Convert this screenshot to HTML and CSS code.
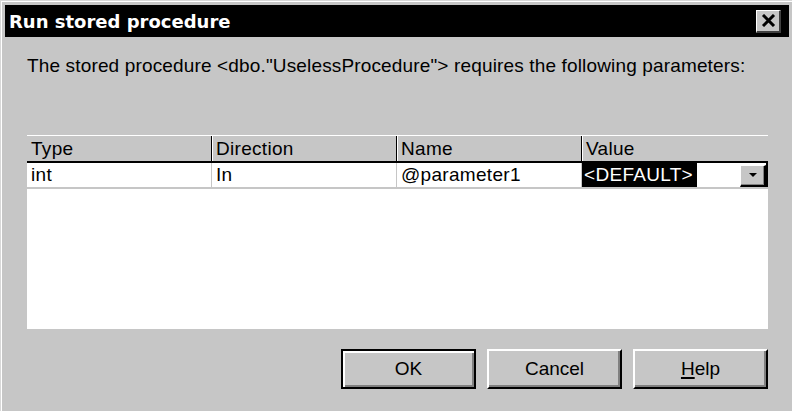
FILE: index.html
```html
<!DOCTYPE html>
<html>
<head>
<meta charset="utf-8">
<link rel="stylesheet" href="styles.css">
</head>
<body>
<div class="window">
  <div class="titlebar">
    <span class="title">Run stored procedure</span>
    <div class="close">
      <svg width="15" height="13" viewBox="0 0 15 13"><path d="M2 1 L13 12 M13 1 L2 12" stroke="#000" stroke-width="3" fill="none"/></svg>
    </div>
  </div>
  <div class="content">
    <p class="desc">The stored procedure &lt;dbo."UselessProcedure"&gt; requires the following parameters:</p>
    <div class="grid">
      <div class="row head">
        <div class="cell">Type</div>
        <div class="cell">Direction</div>
        <div class="cell">Name</div>
        <div class="cell last">Value</div>
      </div>
      <div class="row data">
        <div class="cell">int</div>
        <div class="cell">In</div>
        <div class="cell">@parameter1</div>
        <div class="cell last value">
          <span class="sel">&lt;DEFAULT&gt;</span>
          <div class="drop">
            <svg width="8" height="5" viewBox="0 0 8 5"><path d="M0 0 H8 L4 4 Z" fill="#000"/></svg>
          </div>
        </div>
      </div>
      <div class="empty"></div>
    </div>
    <div class="buttons">
      <div class="btn default"><span>OK</span></div>
      <div class="btn"><span>Cancel</span></div>
      <div class="btn"><span><u>H</u>elp</span></div>
    </div>
  </div>
</div>
</body>
</html>
```

FILE: styles.css
```css
html, body {
  margin: 0;
  padding: 0;
  background: #c6c6c6;
}
.window {
  width: 792px;
  height: 411px;
  box-sizing: border-box;
  border-top: 1px solid #d8d8d8;
  border-left: 1px solid #d8d8d8;
  box-shadow: inset 1px 1px 0 #ffffff;
  padding: 4px 3px 0 4px;
  font-family: "Liberation Sans", Arial, sans-serif;
  color: #000;
}
.titlebar {
  height: 32px;
  background: #000;
  display: flex;
  align-items: center;
  justify-content: space-between;
  padding: 0 8px 0 4px;
}
.title {
  font-family: "DejaVu Sans", sans-serif;
  font-weight: bold;
  font-size: 18px;
  color: #fff;
}
.close {
  width: 25px;
  height: 23px;
  box-sizing: border-box;
  background: #c6c6c6;
  border-top: 1px solid #fff;
  border-left: 1px solid #fff;
  border-right: 2px solid #404040;
  border-bottom: 2px solid #404040;
  display: flex;
  align-items: center;
  justify-content: center;
}
.content {
  padding: 0 0 0 22px;
}
.desc {
  margin: 17px 0 0 0;
  font-size: 19px;
  letter-spacing: 0.15px;
  line-height: 24px;
  white-space: nowrap;
}
.grid {
  margin-top: 57px;
  width: 741px;
  background: #fff;
  font-size: 19px;
  letter-spacing: 0.3px;
}
.row {
  display: flex;
}
.cell {
  width: 185px;
  box-sizing: border-box;
  padding-left: 4px;
  white-space: nowrap;
}
.head {
  height: 28px;
  background: #c6c6c6;
  border-top: 1px solid #fff;
  border-bottom: 2px solid #000;
  box-sizing: border-box;
}
.head .cell {
  border-right: 1px solid #000;
  box-shadow: 1px 0 0 #fff;
  line-height: 25px;
}
.head .cell.last {
  border-right: none;
  box-shadow: none;
  flex: 1;
}
.data {
  height: 26px;
  box-sizing: border-box;
  border-bottom: 2px solid #c6c6c6;
}
.data .cell {
  border-right: 1px solid #c6c6c6;
  line-height: 24px;
}
.data .cell.value {
  flex: 1;
  padding-left: 0;
  display: flex;
  justify-content: space-between;
  border-right: 2px solid #000;
  height: 24px;
}
.sel {
  background: #000;
  color: #fff;
  height: 24px;
  padding: 0 4px 0 2px;
}
.drop {
  width: 26px;
  height: 22px;
  margin-top: 2px;
  box-sizing: border-box;
  background: #c6c6c6;
  border-top: 1px solid #fff;
  border-left: 1px solid #fff;
  border-right: 2px solid #000;
  border-bottom: 2px solid #000;
  box-shadow: inset -1px -1px 0 #808080;
  display: flex;
  align-items: center;
  justify-content: center;
}
.empty {
  height: 140px;
}
.buttons {
  display: flex;
  justify-content: flex-end;
  gap: 11px;
  width: 741px;
  margin-top: 20px;
}
.btn {
  width: 135px;
  height: 40px;
  box-sizing: border-box;
  border-top: 2px solid #fff;
  border-left: 2px solid #fff;
  border-right: 2px solid #000;
  border-bottom: 2px solid #000;
  box-shadow: inset -2px -2px 0 #808080;
  display: flex;
  align-items: center;
  justify-content: center;
  font-size: 19px;
}
.btn.default {
  border: 2px solid #000;
  box-shadow: inset 2px 2px 0 #fff, inset -2px -2px 0 #808080;
}
u {
  text-decoration-thickness: 2px;
  text-underline-offset: 2px;
}
```
